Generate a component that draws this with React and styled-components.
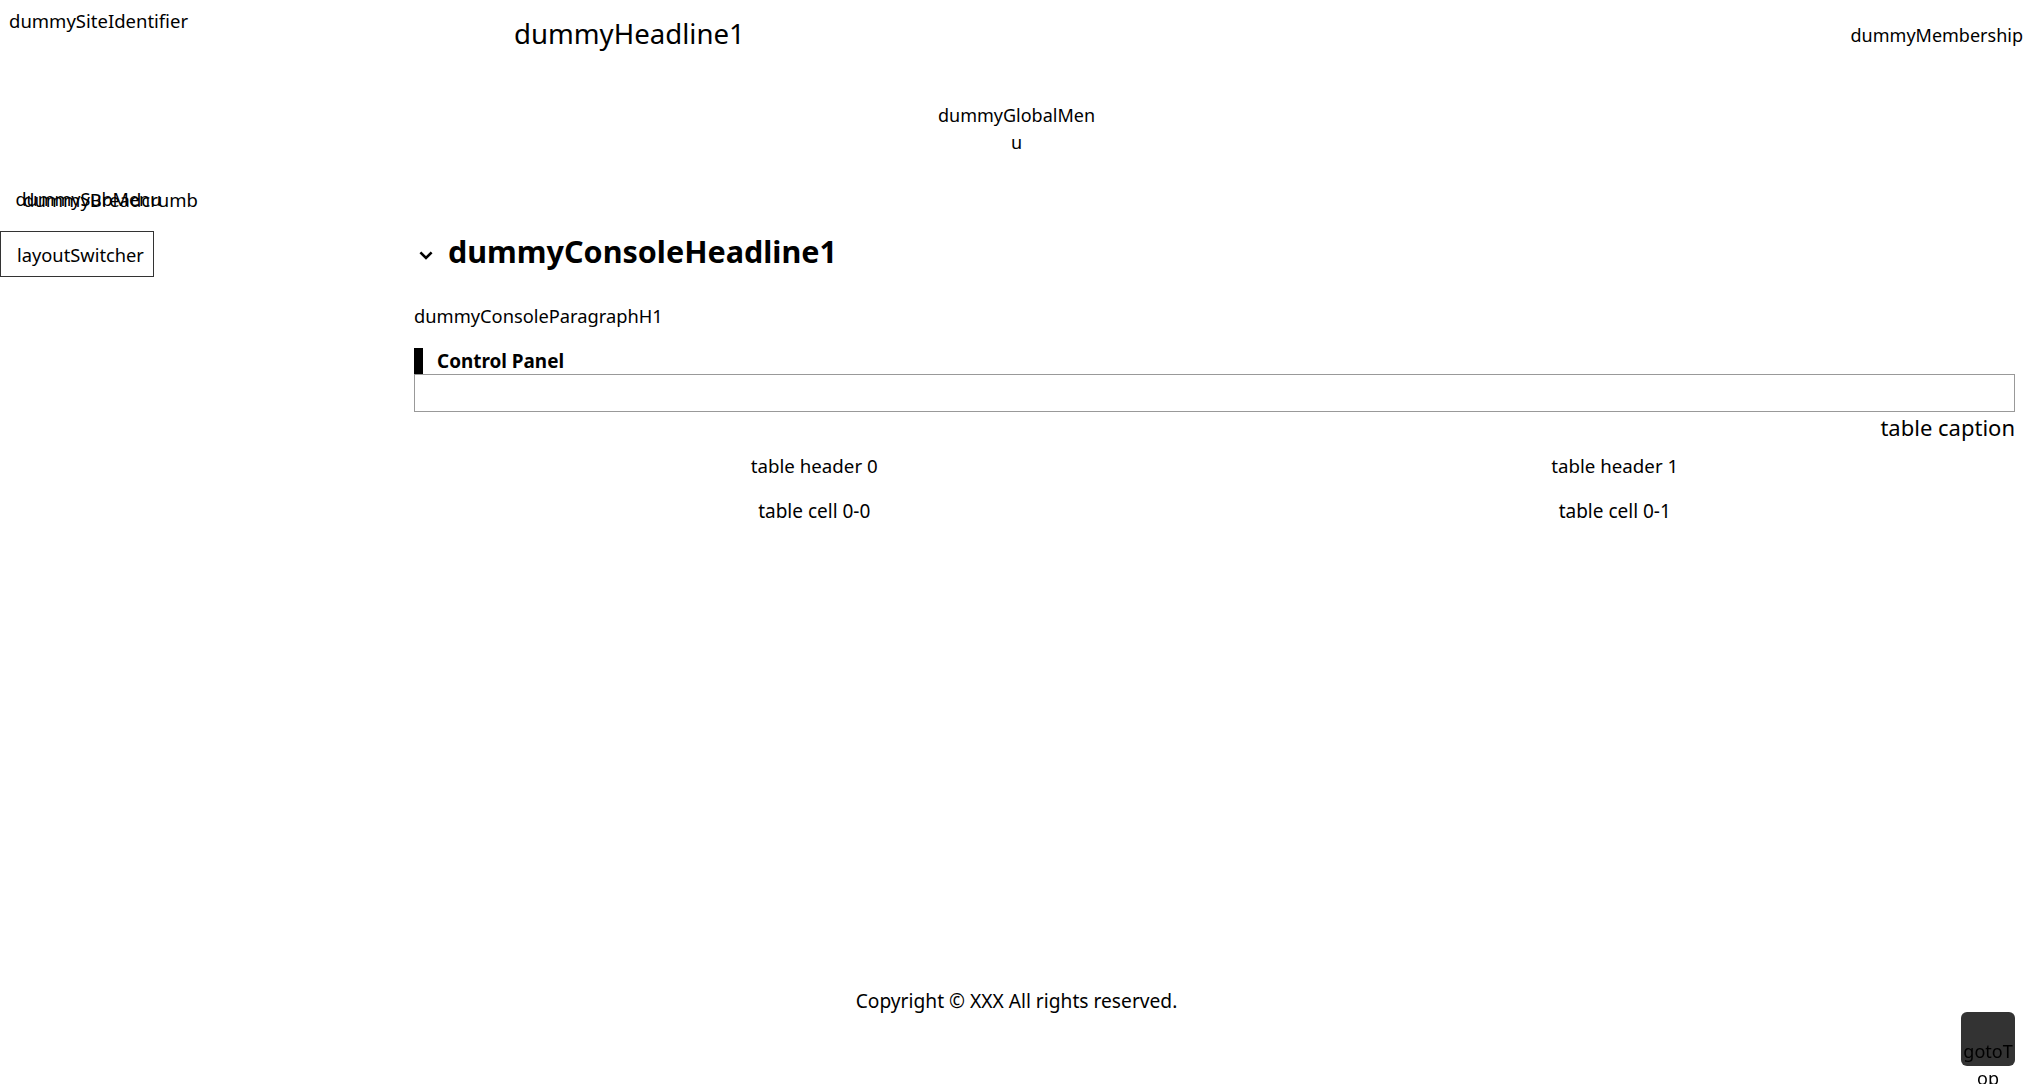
import React from "react";
import styled, { createGlobalStyle } from "styled-components";

const GlobalStyle = createGlobalStyle`
  *, *::before, *::after { box-sizing: border-box; }
  html, body { margin: 0; padding: 0; }
  body {
    font-family: "Noto Sans", "Noto Sans CJK JP", sans-serif;
    font-size: 18px;
    line-height: 1.5;
    color: #000;
    background: #fff;
  }
`;

const Page = styled.div`
  min-height: 100vh;
  display: flex;
  flex-direction: column;
`;

const Header = styled.header`
  display: grid;
  grid-template-columns: 505px 1fr auto;
  align-items: start;
  padding: 7px 10px 0 9px;
`;

const SiteIdentifier = styled.div`
  font-size: 18.5px;
  line-height: 27px;
`;

const Headline = styled.h1`
  margin: 6px 0 0;
  font-size: 27.6px;
  font-weight: 400;
  line-height: 40px;
`;

const Membership = styled.div`
  margin-top: 14.5px;
  line-height: 27px;
`;

const GlobalMenu = styled.nav`
  width: 160px;
  margin: 48.5px auto 0;
  text-align: center;
  line-height: 27px;
  word-break: break-all;
`;

const Body = styled.div`
  display: grid;
  grid-template-columns: 414px 1fr;
  padding: 30px 18px 0 0;
`;

const Sidebar = styled.aside`
  position: relative;
  display: flex;
  flex-direction: column;
  align-items: flex-start;
`;

const Breadcrumb = styled.div`
  position: absolute;
  top: 0;
  left: 23px;
  font-size: 18.5px;
  line-height: 27px;
`;

const SubMenu = styled.div`
  padding-left: 15.5px;
  line-height: 27px;
`;

const LayoutSwitcher = styled.button`
  margin-top: 18.5px;
  height: 46px;
  width: 154px;
  padding: 0 0 0 16px;
  text-align: left;
  border: 1px solid #333;
  background: #fff;
  color: #000;
  font: inherit;
  font-size: 18.3px;
  line-height: 27px;
`;

const Main = styled.main`
  min-width: 0;
`;

const ConsoleHeadline = styled.h2`
  display: flex;
  align-items: center;
  gap: 15px;
  margin: 43px 0 0 5px;
  font-size: 30.5px;
  font-weight: 700;
  line-height: 45px;
`;

const Chevron = styled.svg`
  margin-top: 8px;
  flex: none;
`;

const Paragraph = styled.p`
  margin: 28px 0 0 0;
  font-size: 18.3px;
  line-height: 27px;
`;

const PanelTitle = styled.h3`
  margin: 19.5px 0 0;
  font-size: 18.9px;
  font-weight: 700;
  line-height: 26px;
  border-left: 9px solid #000;
  padding-left: 14px;
`;

const PanelBox = styled.div`
  height: 38px;
  border: 1px solid #999;
`;

const Table = styled.table`
  width: 100%;
  border-collapse: collapse;
  table-layout: fixed;
`;

const Caption = styled.caption`
  caption-side: top;
  text-align: right;
  font-size: 22px;
  line-height: 30px;
`;

const Cell = styled.td`
  padding: 9.5px;
  text-align: center;
  font-weight: 400;
  font-size: 19px;
  line-height: 27px;
`;

const HeadCell = styled(Cell).attrs({ as: "th" })`
  font-size: 18.7px;
`;

const Footer = styled.footer`
  margin-top: auto;
  padding-bottom: 70.5px;
  text-align: center;
  font-size: 19.2px;
  line-height: 27px;
`;

const GotoTop = styled.button`
  position: fixed;
  right: 18px;
  bottom: 18px;
  width: 54px;
  height: 54px;
  padding: 26px 0 0;
  border: none;
  border-radius: 6px;
  background: #333;
  color: #000;
  font: inherit;
  line-height: 27px;
  text-align: center;
  word-break: break-all;
  overflow: visible;
`;

export default function App() {
  return (
    <Page>
      <GlobalStyle />
      <Header>
        <SiteIdentifier>dummySiteIdentifier</SiteIdentifier>
        <Headline>dummyHeadline1</Headline>
        <Membership>dummyMembership</Membership>
      </Header>
      <GlobalMenu>dummyGlobalMenu</GlobalMenu>
      <Body>
        <Sidebar>
          <SubMenu>dummySubMenu</SubMenu>
          <Breadcrumb>dummyBreadcrumb</Breadcrumb>
          <LayoutSwitcher type="button">layoutSwitcher</LayoutSwitcher>
        </Sidebar>
        <Main>
          <ConsoleHeadline>
            <Chevron width="14" height="9" viewBox="0 0 14 9">
              <path d="M1.4 1.4 L7 7 L12.6 1.4" fill="none" stroke="#000" strokeWidth="2.6" />
            </Chevron>
            dummyConsoleHeadline1
          </ConsoleHeadline>
          <Paragraph>dummyConsoleParagraphH1</Paragraph>
          <PanelTitle>Control Panel</PanelTitle>
          <PanelBox />
          <Table>
            <Caption>table caption</Caption>
            <thead>
              <tr>
                <HeadCell>table header 0</HeadCell>
                <HeadCell>table header 1</HeadCell>
              </tr>
            </thead>
            <tbody>
              <tr>
                <Cell>table cell 0-0</Cell>
                <Cell>table cell 0-1</Cell>
              </tr>
            </tbody>
          </Table>
        </Main>
      </Body>
      <Footer>Copyright © XXX All rights reserved.</Footer>
      <GotoTop type="button">gotoTop</GotoTop>
    </Page>
  );
}
